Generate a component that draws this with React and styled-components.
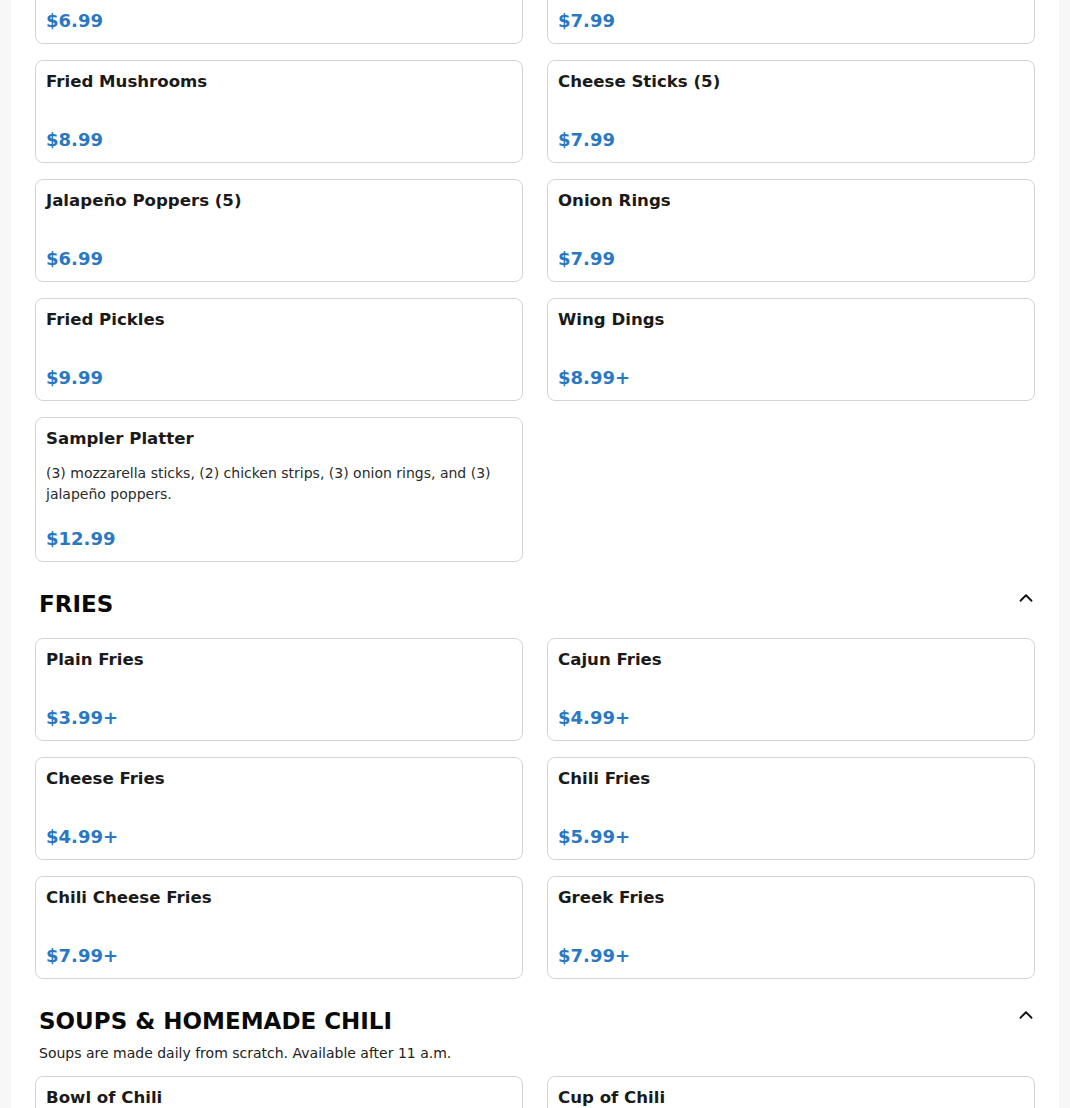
import React from "react";
import styled, { createGlobalStyle } from "styled-components";
import { ChevronUp } from "lucide-react";

const GlobalStyle = createGlobalStyle`
  * { box-sizing: border-box; }
  body {
    margin: 0;
    background: #f7f7f7;
    font-family: "DejaVu Sans", "Liberation Sans", sans-serif;
    color: #1f1f1f;
  }
`;

const sections = [
  {
    id: "apps",
    title: null,
    items: [
      { name: "Mozzarella Sticks (5)", price: "$6.99" },
      { name: "Breaded Zucchini", price: "$7.99" },
      { name: "Fried Mushrooms", price: "$8.99" },
      { name: "Cheese Sticks (5)", price: "$7.99" },
      { name: "Jalapeño Poppers (5)", price: "$6.99" },
      { name: "Onion Rings", price: "$7.99" },
      { name: "Fried Pickles", price: "$9.99" },
      { name: "Wing Dings", price: "$8.99+" },
      {
        name: "Sampler Platter",
        desc: "(3) mozzarella sticks, (2) chicken strips, (3) onion rings, and (3) jalapeño poppers.",
        price: "$12.99",
      },
    ],
  },
  {
    id: "fries",
    title: "FRIES",
    items: [
      { name: "Plain Fries", price: "$3.99+" },
      { name: "Cajun Fries", price: "$4.99+" },
      { name: "Cheese Fries", price: "$4.99+" },
      { name: "Chili Fries", price: "$5.99+" },
      { name: "Chili Cheese Fries", price: "$7.99+" },
      { name: "Greek Fries", price: "$7.99+" },
    ],
  },
  {
    id: "soups",
    title: "SOUPS & HOMEMADE CHILI",
    note: "Soups are made daily from scratch. Available after 11 a.m.",
    items: [
      { name: "Bowl of Chili", price: "$6.99" },
      { name: "Cup of Chili", price: "$4.99" },
    ],
  },
];

// the shot is scrolled part-way into the appetizers, so the page starts above the fold
const Page = styled.main`
  max-width: 1048px;
  margin: -59px auto 0;
  padding: 0 24px 40px;
  background: #fff;
  min-height: 1200px;
`;

const Section = styled.section`
  & + & {
    margin-top: 28px;
  }
`;

const SectionHead = styled.div`
  display: flex;
  justify-content: space-between;
  align-items: flex-start;
  padding-left: 4px;
  margin-bottom: ${(p) => (p.$tight ? "8px" : "20px")};
`;

const SectionTitle = styled.h2`
  margin: 0;
  font-size: 23px;
  line-height: 28px;
  font-weight: 700;
  color: #0a0a0a;
`;

const Toggle = styled.button`
  display: flex;
  border: 0;
  padding: 0;
  background: none;
  color: #111;
  margin: -3px -2px 0 0;
  cursor: pointer;
`;

const Note = styled.p`
  margin: 0 0 13px;
  padding-left: 4px;
  font-size: 14px;
  line-height: 20px;
  color: #222;
`;

const Grid = styled.div`
  display: grid;
  grid-template-columns: 1fr 1fr;
  column-gap: 24px;
  row-gap: 16px;
  align-items: start;
`;

const Card = styled.article`
  display: flex;
  flex-direction: column;
  padding: 10px;
  border: 1px solid #d4d4d4;
  border-radius: 8px;
  background: #fff;
`;

const ItemName = styled.h3`
  margin: 0 0 14px;
  font-size: 16.6px;
  line-height: 21px;
  font-weight: 700;
  color: #1a1a1a;
`;

const ItemDesc = styled.p`
  margin: 0;
  font-size: 14px;
  line-height: 21px;
  color: #2a2a2a;
`;

const Price = styled.div`
  margin-top: 22px;
  font-size: 18px;
  line-height: 24px;
  font-weight: 700;
  color: #2a78c2;
`;

const MenuCard = ({ item }) => (
  <Card>
    <ItemName>{item.name}</ItemName>
    {item.desc && <ItemDesc>{item.desc}</ItemDesc>}
    <Price>{item.price}</Price>
  </Card>
);

export default function App() {
  return (
    <>
      <GlobalStyle />
      <Page>
        {sections.map((s) => (
          <Section key={s.id}>
            {s.title && (
              <>
                <SectionHead $tight={!!s.note}>
                  <SectionTitle>{s.title}</SectionTitle>
                  <Toggle aria-label="Collapse section">
                    <ChevronUp size={22} strokeWidth={2} />
                  </Toggle>
                </SectionHead>
                {s.note && <Note>{s.note}</Note>}
              </>
            )}
            <Grid>
              {s.items.map((item) => (
                <MenuCard key={item.name} item={item} />
              ))}
            </Grid>
          </Section>
        ))}
      </Page>
    </>
  );
}
